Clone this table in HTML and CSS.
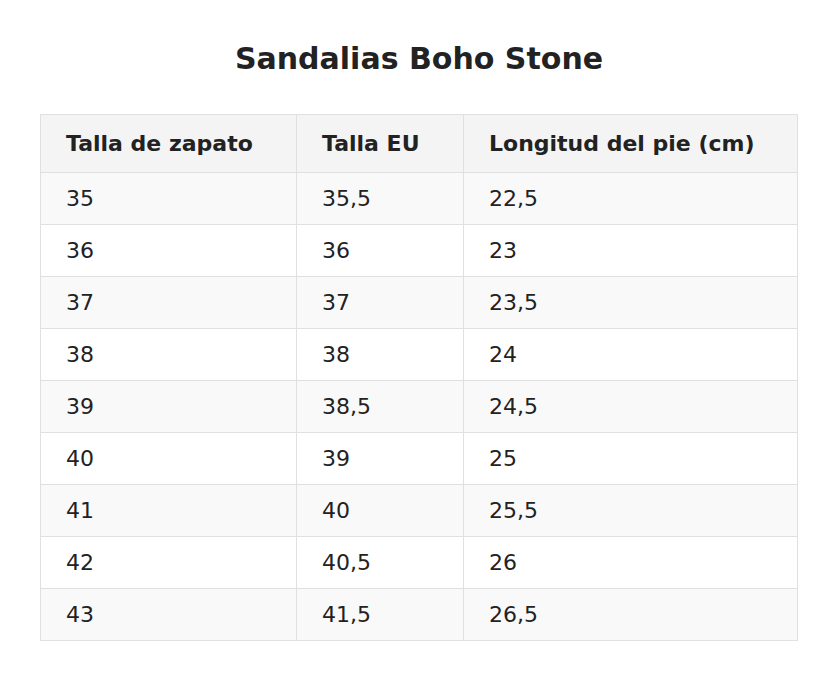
FILE: index.html
```html
<!DOCTYPE html>
<html lang="es">
<head>
<meta charset="utf-8">
<title>Sandalias Boho Stone</title>
<link rel="stylesheet" href="styles.css">
</head>
<body>
<div class="page">
  <h1 class="title">Sandalias Boho Stone</h1>
  <table class="size-table">
    <thead>
      <tr>
        <th class="col-1">Talla de zapato</th>
        <th class="col-2">Talla EU</th>
        <th class="col-3">Longitud del pie (cm)</th>
      </tr>
    </thead>
    <tbody>
      <tr><td>35</td><td>35,5</td><td>22,5</td></tr>
      <tr><td>36</td><td>36</td><td>23</td></tr>
      <tr><td>37</td><td>37</td><td>23,5</td></tr>
      <tr><td>38</td><td>38</td><td>24</td></tr>
      <tr><td>39</td><td>38,5</td><td>24,5</td></tr>
      <tr><td>40</td><td>39</td><td>25</td></tr>
      <tr><td>41</td><td>40</td><td>25,5</td></tr>
      <tr><td>42</td><td>40,5</td><td>26</td></tr>
      <tr><td>43</td><td>41,5</td><td>26,5</td></tr>
    </tbody>
  </table>
</div>
</body>
</html>
```

FILE: styles.css
```css
html, body {
  margin: 0;
  padding: 0;
  background: #ffffff;
}
body {
  font-family: "DejaVu Sans", sans-serif;
  color: #222222;
}
.page {
  padding: 40px;
}
.title {
  margin: 0 0 36px 0;
  text-align: center;
  font-size: 30px;
  line-height: 38px;
  font-weight: bold;
  color: #222222;
}
.size-table {
  width: 100%;
  border-collapse: collapse;
  font-size: 22px;
}
.size-table th,
.size-table td {
  box-sizing: border-box;
  border: 1px solid #e0e0e0;
  text-align: left;
  padding: 0 25px;
  white-space: nowrap;
}
.size-table th {
  background: #f4f4f4;
  font-weight: bold;
  height: 58px;
}
.size-table td {
  height: 52px;
}
.size-table tbody tr:nth-child(odd) td {
  background: #f9f9f9;
}
.col-1 { width: 256px; }
.col-2 { width: 167px; }
```
